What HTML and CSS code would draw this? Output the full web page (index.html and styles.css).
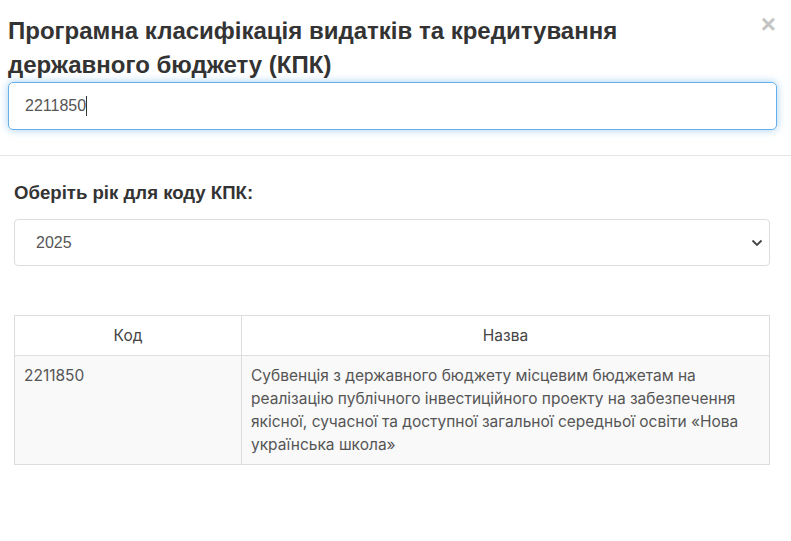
FILE: index.html
```html
<!DOCTYPE html>
<html lang="uk">

<head>
    <meta charset="utf-8">
    <title>КПК</title>
    <link rel="stylesheet" href="styles.css">
</head>

<body>
    <div class="modal-header">
        <button type="button" class="close">&times;</button>
        <h2 class="modal-title">Програмна класифікація видатків та кредитування державного бюджету (КПК)</h2>
        <div class="search-box">2211850<span class="caret"></span></div>
    </div>

    <div class="modal-body">
        <label class="year-label" for="year">Оберіть рік для коду КПК:</label>
        <div class="select-box" id="year">
            <span>2025</span>
            <svg width="12" height="8" viewBox="0 0 12 8"><path d="M1.5 1.5 6 6l4.5-4.5" fill="none" stroke="#444" stroke-width="1.8"/></svg>
        </div>

        <table class="kpk-table">
            <thead>
                <tr>
                    <th class="col-code">Код</th>
                    <th>Назва</th>
                </tr>
            </thead>
            <tbody>
                <tr>
                    <td>2211850</td>
                    <td>Субвенція з державного бюджету місцевим бюджетам на реалізацію публічного інвестиційного проекту на забезпечення якісної, сучасної та доступної загальної середньої освіти «Нова українська школа»</td>
                </tr>
            </tbody>
        </table>
    </div>
</body>

</html>
```

FILE: styles.css
```css
body {
    margin: 0;
    background-color: white;
    color: #333;
    font-family: "Liberation Sans", Arial, sans-serif;
}

.modal-header {
    padding: 14px 14px 25px 8px;
    border-bottom: 1px solid #e5e5e5;
}

.close {
    float: right;
    margin: 0 1px 0 0;
    padding: 0;
    border: none;
    background: none;
    color: #c4c4c4;
    font-family: "Liberation Sans", Arial, sans-serif;
    font-size: 26px;
    font-weight: bold;
    line-height: 20px;
}

.modal-title {
    max-width: 700px;
    margin: 0;
    font-size: 24px;
    line-height: 34px;
    font-weight: bold;
    color: #333;
}

.search-box {
    height: 46px;
    padding: 0 16px;
    border: 1px solid #66afe9;
    border-radius: 5px;
    box-shadow: 0 0 8px rgba(102, 175, 233, 0.6);
    font-size: 16px;
    line-height: 46px;
    color: #555;
    display: flex;
    align-items: center;
}

.caret {
    display: inline-block;
    width: 1px;
    height: 20px;
    background: #333;
}

.modal-body {
    padding: 26px 21px 20px 14px;
}

.year-label {
    display: block;
    font-size: 18.6px;
    font-weight: bold;
    line-height: 22px;
    margin-bottom: 15px;
}

.select-box {
    height: 45px;
    padding: 0 6px 0 21px;
    border: 1px solid #ddd;
    border-radius: 4px;
    display: flex;
    align-items: center;
    justify-content: space-between;
    font-size: 16px;
    color: #555;
}

.kpk-table {
    width: 100%;
    margin-top: 49px;
    border-collapse: collapse;
    font-family: Inter, "Noto Sans", sans-serif;
    font-size: 15.5px;
    color: #555;
}

.kpk-table th,
.kpk-table td {
    border: 1px solid #ddd;
    padding: 8px 9px;
    line-height: 23px;
    vertical-align: top;
    text-align: left;
}

.kpk-table th {
    font-weight: normal;
    text-align: center;
    color: #444;
}

.kpk-table .col-code {
    width: 208px;
}

.kpk-table tbody tr {
    background: #f9f9f9;
}
```
